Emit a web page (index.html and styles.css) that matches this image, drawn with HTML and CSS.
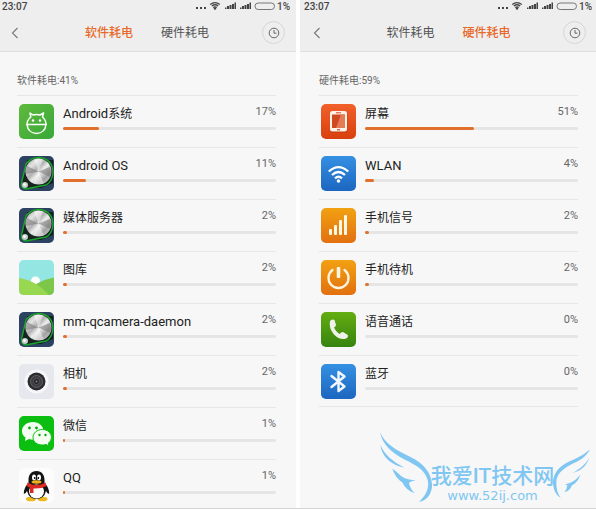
FILE: index.html
```html
<!DOCTYPE html>
<html lang="zh-CN">
<head>
    <meta charset="UTF-8">
    <meta name="viewport" content="width=device-width, initial-scale=1.0">
    <title>耗电排行</title>
    <link rel="stylesheet" href="styles.css">
</head>
<body>
    <!-- shared icons -->
    <svg class="defs" aria-hidden="true">
        <defs>
            <linearGradient id="g-green" x1="0" y1="0" x2="1" y2="1"><stop offset="0" stop-color="#5fba3c"/><stop offset="1" stop-color="#38a839"/></linearGradient>
            <linearGradient id="g-red" x1="0" y1="0" x2="0" y2="1"><stop offset="0" stop-color="#f2602a"/><stop offset="1" stop-color="#d9400f"/></linearGradient>
            <linearGradient id="g-blue" x1="0" y1="0" x2="0" y2="1"><stop offset="0" stop-color="#3590e2"/><stop offset="1" stop-color="#1c66c0"/></linearGradient>
            <linearGradient id="g-orange" x1="0" y1="0" x2="0" y2="1"><stop offset="0" stop-color="#f2a113"/><stop offset="1" stop-color="#e2700f"/></linearGradient>
            <linearGradient id="g-call" x1="0" y1="0" x2="0" y2="1"><stop offset="0" stop-color="#64ad12"/><stop offset="1" stop-color="#368410"/></linearGradient>
            <linearGradient id="g-metal" x1="0" y1="0" x2="1" y2="1"><stop offset="0" stop-color="#8f8f8f"/><stop offset="0.25" stop-color="#e4e4e4"/><stop offset="0.42" stop-color="#b0b0b0"/><stop offset="0.55" stop-color="#eeeeee"/><stop offset="0.75" stop-color="#a2a2a2"/><stop offset="1" stop-color="#e0e0e0"/></linearGradient>
        </defs>
        <symbol id="i-status" viewBox="0 0 80 12">
            <g fill="#444">
                <rect x="1" y="7" width="2" height="2"/><rect x="5" y="7" width="2" height="2"/><rect x="9" y="7" width="2" height="2"/>
                <path d="M32 6h2v3h-2zM34.500 5h2v4h-2zM37 4h2v5h-2zM39.500 2.500h1.500v6.500h-1.500zM30 7.500h1.500v1.500h-1.500z"/>
                <path d="M47 6h2v3h-2zM49.500 5h2v4h-2zM52 4h2v5h-2zM54.500 2.500h1.500v6.500h-1.500zM45 7.500h1.500v1.500h-1.500z"/>
                <circle cx="20" cy="8.500" r="1.200"/>
            </g>
            <g fill="none" stroke="#444" stroke-width="1.300">
                <path d="M15.200 4.500q4.800-3.800 9.600 0M16.800 6q3.200-2.500 6.400 0M18.200 7.500q1.800-1.400 3.600 0"/>
                <rect x="60" y="3" width="19.500" height="6.500" rx="3.200" stroke="#777" stroke-width="1"/>
            </g>
        </symbol>
        <symbol id="i-back" viewBox="0 0 8 12">
            <path d="M6.500 1L1.500 6l5 5" fill="none" stroke="#777" stroke-width="1.100"/>
        </symbol>
        <symbol id="i-clock" viewBox="0 0 12 12">
            <circle cx="6" cy="6" r="4.800" fill="none" stroke="#666" stroke-width="1"/>
            <path d="M6 3v3.200h2.500" fill="none" stroke="#666" stroke-width="1"/>
        </symbol>
        <symbol id="i-knob" viewBox="0 0 35 35">
            <rect width="35" height="35" rx="5" fill="#2c4260"/>
            <path d="M8 4H34V27L22 32H6z" fill="#121d22"/>
            <path d="M7 8Q12 1.500 20 1.500Q34 3 34 17Q33 26 27 29L7 33Q2 32 2.500 27z" fill="#17241f" stroke="#19a52a" stroke-width="1.400"/>
            <circle cx="19.500" cy="15.500" r="13" fill="url(#g-metal)"/>
            <path d="M19.500 15.500L8 10Q6.500 13 6.800 18zM19.500 15.500L31 11Q32.500 15 31 21z" fill="#777" opacity="0.550"/>
            <path d="M19.500 15.500L15 3.500Q20 2 24 3.500zM19.500 15.500L14 27.500Q20 29 25 27.500z" fill="#fff" opacity="0.450"/>
            <circle cx="6" cy="29" r="3" fill="#c7cfc8"/>
            <circle cx="5.500" cy="28.500" r="1.300" fill="#fff"/>
        </symbol>
    </svg>

    <main class="screens">
        <section class="screen">
            <div class="status">
                <span>23:07</span>
                <span class="status-right"><svg class="status-icons"><use href="#i-status"/></svg>1%</span>
            </div>
            <header class="topbar">
                <button class="back" aria-label="返回"><svg><use href="#i-back"/></svg></button>
                <nav class="tabs">
                    <button class="tab active">软件耗电</button>
                    <button class="tab">硬件耗电</button>
                </nav>
                <button class="history" aria-label="历史"><svg><use href="#i-clock"/></svg></button>
            </header>
            <p class="summary">软件耗电:41%</p>
            <ul class="list">
                <li class="row">
                    <svg class="icon" viewBox="0 0 35 35">
                        <rect width="35" height="35" rx="5" fill="url(#g-green)"/>
                        <g fill="none" stroke="#fff" stroke-width="1.500" stroke-linecap="round" stroke-linejoin="round">
                            <path d="M11 9l.8 4Q8 16 8 20.500Q9 29 17.500 29.500Q26 29 27 20.500Q27 16 23.500 13L24.500 9L21 11Q17.500 10 14 11z"/>
                            <path d="M8 20.500h19"/>
                        </g>
                        <circle cx="14" cy="16.500" r="1.200" fill="#fff"/><circle cx="21" cy="16.500" r="1.200" fill="#fff"/>
                    </svg>
                    <div class="info">
                        <span class="name">Android<span class="zh">系统</span></span><span class="percent">17%</span>
                        <div class="bar"><div class="fill" style="width: 17%"></div></div>
                    </div>
                </li>
                <li class="row">
                    <svg class="icon"><use href="#i-knob"/></svg>
                    <div class="info">
                        <span class="name">Android OS</span><span class="percent">11%</span>
                        <div class="bar"><div class="fill" style="width: 11%"></div></div>
                    </div>
                </li>
                <li class="row">
                    <svg class="icon"><use href="#i-knob"/></svg>
                    <div class="info">
                        <span class="name zh">媒体服务器</span><span class="percent">2%</span>
                        <div class="bar"><div class="fill" style="width: 2%"></div></div>
                    </div>
                </li>
                <li class="row">
                    <svg class="icon" viewBox="0 0 35 35">
                        <rect width="35" height="35" rx="5" fill="#94e6e2"/>
                        <circle cx="16.500" cy="21" r="4.500" fill="#fff"/>
                        <path d="M35 17.500Q26 19 17 24V35H30Q35 35 35 30z" fill="#7cc749"/>
                        <path d="M0 18Q12 20 20 26Q27 31 29.500 35H5Q0 35 0 30z" fill="#98d851"/>
                    </svg>
                    <div class="info">
                        <span class="name zh">图库</span><span class="percent">2%</span>
                        <div class="bar"><div class="fill" style="width: 2%"></div></div>
                    </div>
                </li>
                <li class="row">
                    <svg class="icon"><use href="#i-knob"/></svg>
                    <div class="info">
                        <span class="name">mm-qcamera-daemon</span><span class="percent">2%</span>
                        <div class="bar"><div class="fill" style="width: 2%"></div></div>
                    </div>
                </li>
                <li class="row">
                    <svg class="icon" viewBox="0 0 35 35">
                        <rect width="35" height="35" rx="5" fill="#e6e8ee"/>
                        <circle cx="17.500" cy="17.500" r="12" fill="#f7f7fa"/>
                        <circle cx="17.500" cy="17.500" r="9" fill="#2b2b2e"/>
                        <circle cx="17.500" cy="17.500" r="6" fill="#3e3e42" stroke="#626266"/>
                        <circle cx="17.500" cy="17.500" r="3" fill="#222" stroke="#55555a"/>
                        <circle cx="17.500" cy="17.500" r="1" fill="#8a8a8a"/>
                    </svg>
                    <div class="info">
                        <span class="name zh">相机</span><span class="percent">2%</span>
                        <div class="bar"><div class="fill" style="width: 2%"></div></div>
                    </div>
                </li>
                <li class="row">
                    <svg class="icon" viewBox="0 0 35 35">
                        <rect width="35" height="35" rx="5" fill="#0abf10"/>
                        <path d="M14 6C7.500 6 3 10 3 15Q3 19 6.500 21.500L6 25L10 23Q12 23.700 14 23.700C20 23.700 24.500 20 24.500 15S20 6 14 6z" fill="#f4fff2"/>
                        <path d="M23.500 13.500C18 13.500 14 17 14 21.500S18 29 23.500 29Q25.500 29 27 28.400L30 30L29.300 27Q32.500 25 32.500 21.500C32.500 17 28.500 13.500 23.500 13.500z" fill="#f4fff2" stroke="#0abf10" stroke-width="1"/>
                        <g fill="#0aa80f"><circle cx="10.500" cy="12" r="1.400"/><circle cx="17.500" cy="12" r="1.400"/><circle cx="20.500" cy="19" r="1.200"/><circle cx="26.500" cy="19" r="1.200"/></g>
                    </svg>
                    <div class="info">
                        <span class="name zh">微信</span><span class="percent">1%</span>
                        <div class="bar"><div class="fill" style="width: 1%"></div></div>
                    </div>
                </li>
                <li class="row">
                    <svg class="icon" viewBox="0 0 35 35">
                        <rect width="35" height="35" rx="5" fill="#fcfcfc"/>
                        <ellipse cx="12" cy="31" rx="5" ry="2.300" fill="#efb81f"/><ellipse cx="23.500" cy="31" rx="5" ry="2.300" fill="#efb81f"/>
                        <path d="M17.500 3C12 3 9.500 7 9.500 12V15Q4.500 20 4.800 26Q6.500 26 8 23Q10 31 17.500 31T27 23Q28.500 26 30.200 26Q30.500 20 25.500 15V12C25.500 7 23 3 17.500 3z" fill="#141414"/>
                        <ellipse cx="17.500" cy="23.500" rx="7.500" ry="7" fill="#fff"/>
                        <path d="M8.500 14.500Q17.500 19.500 26.500 14.500L27.500 18Q22 21 14.500 20.500V25H11V19.800L7.500 18z" fill="#dc2a22"/>
                        <ellipse cx="15" cy="9.500" rx="2" ry="3" fill="#fff"/><ellipse cx="20" cy="9.500" rx="2" ry="3" fill="#fff"/>
                        <circle cx="15.700" cy="10" r="0.900"/><circle cx="19.300" cy="10" r="0.900"/>
                        <ellipse cx="17.500" cy="14" rx="5" ry="1.700" fill="#efb01c"/>
                    </svg>
                    <div class="info">
                        <span class="name">QQ</span><span class="percent">1%</span>
                        <div class="bar"><div class="fill" style="width: 1%"></div></div>
                    </div>
                </li>
            </ul>
        </section>

        <section class="screen hardware">
            <div class="status">
                <span>23:07</span>
                <span class="status-right"><svg class="status-icons"><use href="#i-status"/></svg>1%</span>
            </div>
            <header class="topbar">
                <button class="back" aria-label="返回"><svg><use href="#i-back"/></svg></button>
                <nav class="tabs">
                    <button class="tab">软件耗电</button>
                    <button class="tab active">硬件耗电</button>
                </nav>
                <button class="history" aria-label="历史"><svg><use href="#i-clock"/></svg></button>
            </header>
            <p class="summary">硬件耗电:59%</p>
            <ul class="list">
                <li class="row">
                    <svg class="icon" viewBox="0 0 35 35">
                        <rect width="35" height="35" rx="5" fill="url(#g-red)"/>
                        <rect x="9.500" y="7.500" width="17" height="21" rx="2.500" fill="#9c2f0c" opacity="0.500"/>
                        <rect x="9" y="7" width="17" height="20.500" rx="2.500" fill="#fff3ea"/>
                        <rect x="11" y="10.500" width="13" height="13.500" fill="#cf4a20"/>
                        <path d="M20 10.500h4V24H15z" fill="#e57c56"/>
                        <rect x="15" y="8.300" width="5" height="1" fill="#d04a1c"/><rect x="16" y="25.200" width="3" height="1.200" fill="#d04a1c"/>
                    </svg>
                    <div class="info">
                        <span class="name zh">屏幕</span><span class="percent">51%</span>
                        <div class="bar"><div class="fill" style="width: 51%"></div></div>
                    </div>
                </li>
                <li class="row">
                    <svg class="icon" viewBox="0 0 35 35">
                        <rect width="35" height="35" rx="5" fill="url(#g-blue)"/>
                        <g fill="none" stroke="#fff" stroke-width="2.300">
                            <path d="M7.800 15.500q9.700-8.800 19.400 0M11 19q6.500-6 13 0M14 22.300q3.500-3 7 0"/>
                        </g>
                        <circle cx="17.500" cy="25" r="1.800" fill="#fff"/>
                    </svg>
                    <div class="info">
                        <span class="name">WLAN</span><span class="percent">4%</span>
                        <div class="bar"><div class="fill" style="width: 4%"></div></div>
                    </div>
                </li>
                <li class="row">
                    <svg class="icon" viewBox="0 0 35 35">
                        <rect width="35" height="35" rx="5" fill="url(#g-orange)"/>
                        <g fill="#fff8e4">
                            <rect x="8" y="21" width="3" height="6" rx="1"/><rect x="13" y="17" width="3" height="10" rx="1"/>
                            <rect x="18" y="12" width="3" height="15" rx="1"/><rect x="23" y="7" width="3" height="20" rx="1"/>
                        </g>
                    </svg>
                    <div class="info">
                        <span class="name zh">手机信号</span><span class="percent">2%</span>
                        <div class="bar"><div class="fill" style="width: 2%"></div></div>
                    </div>
                </li>
                <li class="row">
                    <svg class="icon" viewBox="0 0 35 35">
                        <rect width="35" height="35" rx="5" fill="url(#g-orange)"/>
                        <path d="M11.500 10A10 10 0 1 0 23.500 10" fill="none" stroke="#fff5df" stroke-width="2.300" stroke-linecap="round"/>
                        <rect x="15.700" y="7" width="3.600" height="11" rx="1" fill="#fff5df"/>
                    </svg>
                    <div class="info">
                        <span class="name zh">手机待机</span><span class="percent">2%</span>
                        <div class="bar"><div class="fill" style="width: 2%"></div></div>
                    </div>
                </li>
                <li class="row">
                    <svg class="icon" viewBox="0 0 35 35">
                        <rect width="35" height="35" rx="5" fill="url(#g-call)"/>
                        <path d="M9 9Q11 6.500 13.500 8L15 13Q14.800 14.500 13 15.500Q14.500 19.500 18.500 22Q20.500 19.800 22 20L26.500 22.800Q28 25 25 26.500Q19 28.500 13 22.500Q7.500 16 9 9z" fill="#eef2e8"/>
                    </svg>
                    <div class="info">
                        <span class="name zh">语音通话</span><span class="percent">0%</span>
                        <div class="bar"></div>
                    </div>
                </li>
                <li class="row">
                    <svg class="icon" viewBox="0 0 35 35">
                        <rect width="35" height="35" rx="5" fill="url(#g-blue)"/>
                        <path d="M10.500 12L23.500 22.500L17.500 27V8L23.500 12.500L10.500 23" fill="none" stroke="#f2f8ff" stroke-width="2.400" stroke-linejoin="round" stroke-linecap="round"/>
                    </svg>
                    <div class="info">
                        <span class="name zh">蓝牙</span><span class="percent">0%</span>
                        <div class="bar"></div>
                    </div>
                </li>
            </ul>
        </section>

        <div class="watermark">
            <svg class="wings" viewBox="0 0 693 252" aria-hidden="true">
                <g fill="#80c6f2">
                    <path d="M45 24C58 58 95 80 135 98C180 118 204 155 201 190C197 216 182 231 162 234C182 215 194 194 188 168C180 138 155 124 120 107C78 86 52 60 45 24z"/>
                    <path d="M46 62C58 92 84 112 118 131C82 124 50 100 46 62z"/>
                    <path d="M82 134C97 143 108 159 124 164Q136 167 152 169Q138 171 132 176Q134 192 149 208C128 199 118 188 113 176C98 166 88 152 82 134z"/>
                    <path d="M675 76C662 102 640 112 617 122C590 136 574 152 574 176C574 198 580 212 588 222C572 214 564 196 564 172C566 148 582 128 608 115C634 103 656 94 675 76z"/>
                    <path d="M673 101C664 126 648 140 622 147C646 134 660 122 673 101z"/>
                    <path d="M646 151C640 172 630 179 620 185C618 194 610 201 598 205Q606 196 607 184L600 181C620 177 636 167 646 151z"/>
                </g>
            </svg>
            <span class="brand">我爱IT技术网</span>
            <span class="site">www.52ij.com</span>
        </div>
    </main>
</body>
</html>
```

FILE: styles.css
```css
* {
    margin: 0;
    padding: 0;
    box-sizing: border-box;
}
body {
    background: #fff;
    color: #222;
    font-family: Roboto, "Noto Sans CJK SC", sans-serif;
}
button {
    border: none;
    background: none;
    font-family: inherit;
    cursor: pointer;
}
.defs {
    display: block;
    width: 0;
    height: 0;
}
.screens {
    position: relative;
    display: flex;
    gap: 4px;
    border-bottom: 1px solid #d4d4d4;
}
.screen {
    flex: 1;
    background: #f7f7f7;
}

/* status bar + title bar */
.status {
    display: flex;
    justify-content: space-between;
    height: 14px;
    padding: 0 6px 0 2px;
    background: #eee;
    color: #444;
    font-size: 10px;
    font-weight: 500;
    line-height: 14px;
}
.status-right {
    display: flex;
    gap: 2px;
}
.status-icons {
    width: 80px;
    height: 12px;
}
.topbar {
    display: flex;
    justify-content: space-between;
    align-items: center;
    height: 38px;
    padding: 0 11px 0 8px;
    background: #eee;
    border-bottom: 1px solid #dfdfdf;
}
.back {
    display: flex;
    width: 24px;
    padding: 0 3px;
}
.back svg {
    width: 8px;
    height: 12px;
}
.tabs {
    display: flex;
    gap: 28px;
}
.tab {
    color: #555;
    font-size: 12px;
    line-height: 22px;
}
.tab.active {
    color: #e8692a;
    font-weight: 500;
}
.history {
    display: flex;
    justify-content: center;
    align-items: center;
    width: 23px;
    height: 23px;
    border: 1px solid #d6d6d6;
    border-radius: 50%;
}
.history svg {
    width: 12px;
    height: 12px;
}

/* usage list */
.summary {
    padding: 21px 20px 0 17px;
    height: 43px;
    color: #666;
    font-size: 10px;
    line-height: 16px;
}
.list {
    padding: 0 20px 0 17px;
    list-style: none;
}
.row {
    display: flex;
    gap: 9px;
    height: 52px;
    padding: 8px 0 0 2px;
    border-top: 1px solid #e6e6e6;
}
.screen:first-child .row:last-child {
    height: 49px;
}
.icon {
    flex: none;
    width: 35px;
    height: 35px;
}
.info {
    flex: 1;
    display: grid;
    grid-template-columns: 1fr auto;
    align-content: start;
    row-gap: 3px;
}
.name {
    font-size: 13px;
    line-height: 20px;
}
.zh {
    font-size: 12px;
}
.percent {
    color: #666;
    font-size: 11px;
    line-height: 16px;
}
.bar {
    grid-column: 1 / -1;
    height: 3px;
    border-radius: 2px;
    background: #e5e5e5;
}
.fill {
    height: 3px;
    border-radius: 2px;
    background: #e0702c;
}

.hardware .status {
    padding: 0 4px;
}
.hardware .topbar {
    padding: 0 10px;
}
.hardware .summary,
.hardware .list {
    padding-left: 19px;
    padding-right: 18px;
}
.hardware .row:last-child {
    border-bottom: 1px solid #e6e6e6;
}

/* site mark over the lower right corner */
.watermark {
    position: absolute;
    right: 0;
    bottom: 0;
    width: 231px;
    height: 84px;
    padding: 39px 0 0 24px;
    color: #80c6f2;
    text-align: center;
}
.wings {
    position: absolute;
    left: 0;
    top: 0;
    width: 231px;
    height: 84px;
}
.brand {
    display: block;
    font-size: 21px;
    font-weight: 500;
    line-height: 26px;
}
.site {
    display: block;
    font-family: "DejaVu Sans", sans-serif;
    font-size: 13px;
    line-height: 14px;
}
```
